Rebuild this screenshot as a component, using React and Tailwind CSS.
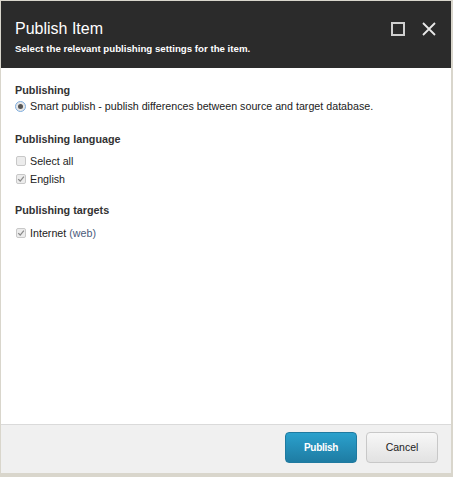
// Publish Item dialog
const font = { fontFamily: '"Liberation Sans", Arial, sans-serif' }

function Radio() {
  return (
    <span className="w-[11px] h-[11px] rounded-full border border-[#7eaee0] bg-[#e6e6e6] flex items-center justify-center shrink-0">
      <span className="w-[5px] h-[5px] rounded-full bg-[#555]" />
    </span>
  )
}

function Check({ checked }) {
  return (
    <span className="w-[10px] h-[10px] rounded-[2px] border border-[#c8c8c8] bg-[#ececec] flex items-center justify-center shrink-0">
      {checked && (
        <svg viewBox="0 0 10 10" className="w-[8px] h-[8px]">
          <path d="M1.5 5.2 L4 7.6 L8.6 2" fill="none" stroke="#8a8a8a" strokeWidth="1.6" />
        </svg>
      )}
    </span>
  )
}

function Row({ control, children, className = '' }) {
  return (
    <div className={`flex items-center gap-[4px] text-[10.7px] leading-[14px] text-[#222] ${className}`}>
      {control}
      <span>{children}</span>
    </div>
  )
}

function Heading({ children, className = '' }) {
  return (
    <h3 className={`text-[10.8px] leading-[14px] font-bold text-[#333] ${className}`}>{children}</h3>
  )
}

export default function App() {
  return (
    <div className="w-[453px] h-[477px] bg-[#d9d6cc] pt-px pl-px" style={font}>
      <div className="w-[450px] h-[472px] flex flex-col bg-white">
        {/* header */}
        <div className="h-[67px] bg-[#2b2b2b] px-[14px] pt-[18px] flex justify-between">
          <div>
            <h1 className="text-[16px] leading-[20px] text-white">Publish Item</h1>
            <p className="mt-[3.5px] text-[9.7px] leading-[12px] font-bold text-white">
              Select the relevant publishing settings for the item.
            </p>
          </div>
          <div className="flex items-start gap-[17px] pt-[3px] pr-[1px]">
            <svg viewBox="0 0 14 14" className="w-[14px] h-[14px]">
              <rect x="1" y="1" width="12" height="12" fill="none" stroke="#d0d0d0" strokeWidth="2" />
            </svg>
            <svg viewBox="0 0 14 14" className="w-[14px] h-[14px]">
              <path d="M1 1 L13 13 M13 1 L1 13" fill="none" stroke="#e8e8e8" strokeWidth="1.8" />
            </svg>
          </div>
        </div>

        {/* body */}
        <div className="flex-1 px-[14px] pt-[14.7px]">
          <Heading>Publishing</Heading>
          <Row className="mt-[2.5px]" control={<Radio />}>
            Smart publish - publish differences between source and target database.
          </Row>

          <Heading className="mt-[18.7px]">Publishing language</Heading>
          <Row className="mt-[8.3px] pl-px" control={<Check />}>Select all</Row>
          <Row className="mt-[4px] pl-px" control={<Check checked />}>English</Row>

          <Heading className="mt-[17px]">Publishing targets</Heading>
          <Row className="mt-[8.7px] pl-px" control={<Check checked />}>
            Internet <span className="text-[#4b5a7a]">(web)</span>
          </Row>
        </div>

        {/* footer */}
        <div className="h-[49px] border-t border-[#dadada] bg-[#f0f0f0] flex justify-end items-start gap-[9px] pt-[7px] pr-[13px]">
          <button className="w-[72px] h-[31px] rounded-[4px] border border-[#1f7aa0] bg-gradient-to-b from-[#2ba1cd] to-[#1e7ca3] text-white text-[10px] font-bold tracking-[-0.3px]">
            Publish
          </button>
          <button className="w-[72px] h-[31px] rounded-[4px] border border-[#c8c8c8] bg-gradient-to-b from-[#f7f7f7] to-[#e2e2e2] text-[#222] text-[10.5px]">
            Cancel
          </button>
        </div>
      </div>
    </div>
  )
}
